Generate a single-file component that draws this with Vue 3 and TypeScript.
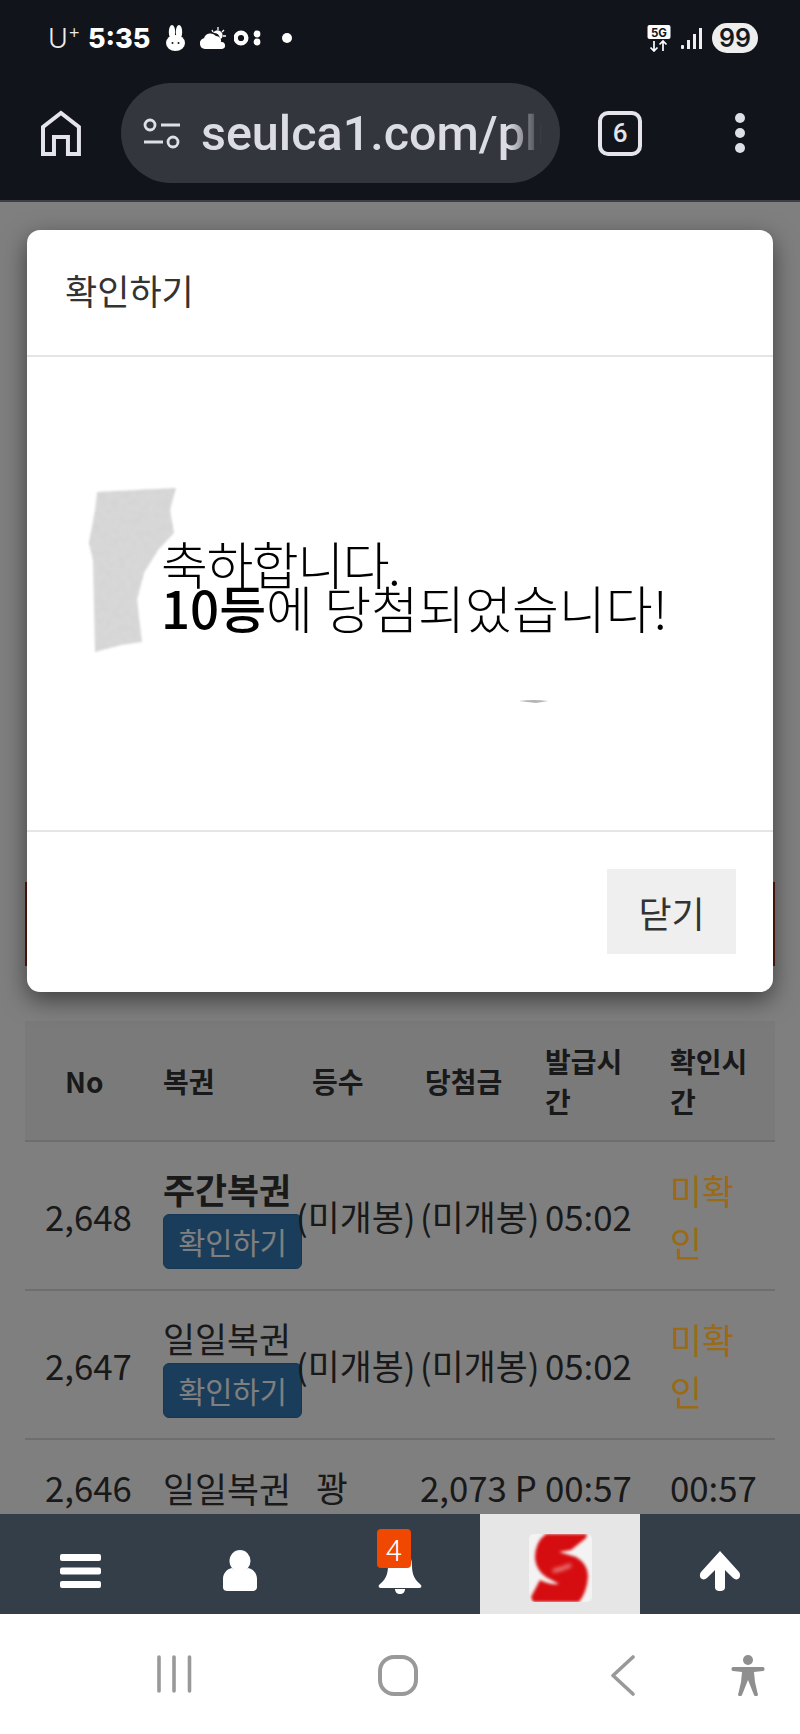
<template>
  <div class="phone">
    <header class="chrome">
      <div class="status">
        <div class="status-left">
          <span class="carrier">U<sup>+</sup></span>
          <span class="clock">5:35</span>
          <svg class="ic-rabbit" width="19" height="26" viewBox="0 0 19 26" fill="#fff">
            <ellipse cx="6" cy="7" rx="3.200" ry="7" />
            <ellipse cx="13" cy="7" rx="3.200" ry="7" />
            <ellipse cx="9.500" cy="18" rx="9.500" ry="8" />
            <circle cx="6.500" cy="18" r="1" fill="#12141b" />
            <circle cx="12.500" cy="18" r="1" fill="#12141b" />
          </svg>
          <svg class="ic-cloud" width="26" height="22" viewBox="0 0 26 22" fill="#fff">
            <path d="M5 22a5.500 5.500 0 0 1-1-10.800A7 7 0 0 1 16 9a5 5 0 0 1 5 6 3.500 3.500 0 0 1 1 7z" />
            <path d="M13 6a5 5 0 0 1 9 5l-2 1a6 6 0 0 0-7-6z" />
            <path d="M18 0v3M24 3l-2 2M12 3l1 2M26 9h-3" stroke="#fff" stroke-width="1.300" />
          </svg>
          <svg class="ic-ring" width="27" height="16" viewBox="0 0 27 16">
            <circle cx="7" cy="8" r="5.300" fill="none" stroke="#fff" stroke-width="4.400" />
            <circle cx="23" cy="4" r="3.400" fill="#fff" />
            <circle cx="23" cy="12" r="3.400" fill="#fff" />
          </svg>
          <span class="status-dot" />
        </div>
        <div class="status-right">
          <svg width="24" height="27" viewBox="0 0 24 27">
            <rect x="0.500" width="23" height="14" rx="2" fill="#fff" />
            <text x="12" y="11.500" text-anchor="middle" class="net-text">5G</text>
            <path d="M7 16v10M3.500 22.500 7 26l3.500-3.500M16 26V16M12.500 19.500 16 16l3.500 3.500" fill="none" stroke="#fff" stroke-width="1.700" />
          </svg>
          <svg width="21" height="21" viewBox="0 0 21 21" fill="#eee">
            <rect x="0" y="17" width="3" height="4" rx="1" />
            <rect x="6" y="12" width="3" height="9" />
            <rect x="12" y="6" width="3" height="15" />
            <rect x="18" y="0" width="3" height="21" />
          </svg>
          <span class="battery">99</span>
        </div>
      </div>
      <div class="toolbar">
        <svg class="ic-home" width="42" height="46" viewBox="0 0 42 46" fill="none" stroke="#e4e4ea" stroke-width="4">
          <path d="M3 44V17L21 3l18 14v27H28V27H14v17z" />
        </svg>
        <div class="url-pill">
          <svg width="38" height="31" viewBox="0 0 38 31" fill="none" stroke="#dfdfe6" stroke-width="2.800">
            <circle cx="7" cy="7" r="5" />
            <path d="M18 7h19M1 24h19" />
            <circle cx="30" cy="24" r="5" />
          </svg>
          <span class="url-text">seulca1.com/plus</span>
        </div>
        <div class="tabs">6</div>
        <svg class="ic-more" width="12" height="42" viewBox="0 0 12 42" fill="#dedee6">
          <circle cx="6" cy="6" r="5" />
          <circle cx="6" cy="21" r="5" />
          <circle cx="6" cy="36" r="5" />
        </svg>
      </div>
    </header>

    <main class="page">
      <div class="banner" />
      <div class="table">
        <div class="thead">
          <div class="th th-no">No</div>
          <div class="th">복권</div>
          <div class="th th-rank">등수</div>
          <div class="th th-prize">당첨금</div>
          <div class="th th-wrap">발급시간</div>
          <div class="th th-wrap">확인시간</div>
        </div>
        <div v-for="row in rows" :key="row.no" class="tr" :class="{ 'tr-short': !row.open }">
          <div class="td td-no">{{ row.no }}</div>
          <div class="td td-name">
            <div :class="{ strong: row.strong }">{{ row.name }}</div>
            <button v-if="row.open" class="open-btn" type="button">확인하기</button>
          </div>
          <div class="td" :class="{ 'td-rank': row.rank === '꽝' }">{{ row.rank }}</div>
          <div class="td">{{ row.prize }}</div>
          <div class="td">{{ row.issued }}</div>
          <div class="td td-check" :class="{ unchecked: row.checked === '미확인' }">{{ row.checked }}</div>
        </div>
      </div>

      <div class="backdrop" />

      <section class="modal">
        <div class="modal-head">확인하기</div>
        <div class="modal-body">
          <svg class="scratch" width="746" height="474" viewBox="27 357 746 474">
            <defs>
              <filter id="grain" x="-5%" y="-5%" width="110%" height="110%">
                <feTurbulence type="fractalNoise" baseFrequency="0.16" numOctaves="3" seed="4" result="noise" />
                <feColorMatrix in="noise" type="matrix" values="0 0 0 0 0.66  0 0 0 0 0.66  0 0 0 0 0.66  3.5 0 0 0 -1.5" result="spots" />
                <feComposite in="spots" in2="SourceGraphic" operator="in" result="clipped" />
                <feMerge result="merged">
                  <feMergeNode in="SourceGraphic" />
                  <feMergeNode in="clipped" />
                </feMerge>
                <feGaussianBlur in="merged" stdDeviation="0.800" />
              </filter>
            </defs>
            <path
              class="patch"
              filter="url(#grain)"
              d="M97 492 176 488 170 510 174 533 158 550 144 573 137 600 142 642 121 645 95 652 93 560 89 543 95 510z"
            />
            <path d="M519 701q14-2 29 0l-12 2z" fill="#b5b5b5" />
          </svg>
          <p class="prize-text"><span class="prize-first">축하합니다.</span><br><b>10등</b>에 당첨되었습니다!</p>
        </div>
        <div class="modal-foot">
          <button class="close-btn" type="button">닫기</button>
        </div>
      </section>
    </main>

    <nav class="bottom-nav">
      <div class="nav-item">
        <svg width="41" height="34" viewBox="0 0 41 34" fill="#fff">
          <rect width="41" height="7" rx="2" />
          <rect y="13.500" width="41" height="7" rx="2" />
          <rect y="27" width="41" height="7" rx="2" />
        </svg>
      </div>
      <div class="nav-item">
        <svg width="34" height="41" viewBox="0 0 34 41" fill="#fff">
          <ellipse cx="17" cy="11" rx="10.500" ry="11" />
          <path d="M9 18c3 4 13 4 16 0 5 1 9 5 9 11v8c0 3-2 4-5 4H5c-3 0-5-1-5-4v-8c0-6 4-10 9-11z" />
        </svg>
      </div>
      <div class="nav-item nav-bell">
        <svg width="44" height="46" viewBox="0 0 44 46" fill="#fff">
          <path d="M22 0c2 0 3 1 3 3 7 2 9 8 9 15 0 9 3 14 9 19 1 2 0 3-2 3H3c-2 0-3-1-2-3 6-5 9-10 9-19 0-7 2-13 9-15 0-2 1-3 3-3z" />
          <path d="M17 41h10c0 3-2 5-5 5s-5-2-5-5z" />
        </svg>
        <span class="badge">4</span>
      </div>
      <div class="nav-item nav-logo">
        <svg class="logo" width="63" height="68" viewBox="0 0 63 68">
          <path
            class="logo-s"
            d="M17 0H58L57 4 42 16 30 18 47 23Q59 30 59 42 58 58 50 68H4L2 63 11 46Q20 51 30 50L17 43Q7 36 6 24 6 8 17 0Z"
          />
          <path class="logo-glint" d="M24 37Q34 35 42 31" />
        </svg>
      </div>
      <div class="nav-item">
        <svg width="42" height="40" viewBox="0 0 42 40" fill="#fff">
          <path d="M21 0 40 21c2 3 1 6-1 7s-4 0-6-2l-7-7v17c0 3-2 4-5 4s-5-1-5-4V19l-7 7c-2 2-4 3-6 2s-3-4-1-7z" />
        </svg>
      </div>
    </nav>

    <footer class="system-nav">
      <svg class="sys-recent" width="37" height="38" viewBox="0 0 37 38" stroke="#999" stroke-width="3.600" stroke-linecap="round">
        <path d="M3 2v34M18 2v34M33.500 2v34" />
      </svg>
      <svg class="sys-home" width="40" height="41" viewBox="0 0 40 41" fill="none" stroke="#999" stroke-width="4">
        <rect x="2" y="2" width="36" height="37" rx="14" />
      </svg>
      <svg class="sys-back" width="26" height="41" viewBox="0 0 26 41" fill="none" stroke="#999" stroke-width="3.600" stroke-linecap="round" stroke-linejoin="round">
        <path d="M23 2 3 20.500 23 39" />
      </svg>
      <svg class="sys-access" width="34" height="41" viewBox="0 0 34 41" fill="#8f8f8f">
        <circle cx="17" cy="5" r="5" />
        <path d="M2 12h30c2 0 2 4 0 4l-9 1 1 10 3 13c0 1-3 2-4 0l-6-15-6 15c-1 2-4 1-4 0l3-13 1-10-9-1c-2 0-2-4 0-4z" />
      </svg>
    </footer>
  </div>
</template>

<script setup lang="ts">
interface LottoRow {
  no: string;
  name: string;
  strong?: boolean;
  open?: boolean;
  rank: string;
  prize: string;
  issued: string;
  checked: string;
}

const rows: LottoRow[] = [
  { no: '2,648', name: '주간복권', strong: true, open: true, rank: '(미개봉)', prize: '(미개봉)', issued: '05:02', checked: '미확인' },
  { no: '2,647', name: '일일복권', open: true, rank: '(미개봉)', prize: '(미개봉)', issued: '05:02', checked: '미확인' },
  { no: '2,646', name: '일일복권', rank: '꽝', prize: '2,073 P', issued: '00:57', checked: '00:57' },
];
</script>

<style>
html,
body {
  margin: 0;
  background: #fff;
}
</style>

<style scoped>
.phone {
  display: flex;
  flex-direction: column;
  width: 800px;
  height: 1734px;
  overflow: hidden;
  font-family: "Noto Sans CJK KR", "Noto Sans", sans-serif;
  color: #333;
}

.chrome {
  flex: none;
  height: 202px;
  background: #12141b;
  border-bottom: 2px solid #3c3f47;
  box-sizing: border-box;
}

.status {
  display: flex;
  justify-content: space-between;
  align-items: center;
  height: 76px;
  padding: 0 42px 0 48px;
}

.status-left,
.status-right {
  display: flex;
  align-items: center;
}

.carrier {
  width: 40px;
  font-family: "Inter", sans-serif;
  font-size: 27px;
  font-weight: 300;
  color: #eee;
}

.carrier sup {
  font-size: 19px;
  line-height: 0;
}

.clock {
  width: 78px;
  font-family: "Inter", sans-serif;
  font-size: 27px;
  font-weight: 800;
  color: #fff;
}

.ic-cloud {
  margin-left: 15px;
}

.ic-ring {
  margin-left: 8px;
}

.status-dot {
  width: 10px;
  height: 10px;
  margin-left: 21px;
  border-radius: 50%;
  background: #fff;
}

.status-right {
  gap: 10px;
}

.net-text {
  font-family: "Inter", sans-serif;
  font-size: 11.500px;
  font-weight: 700;
  fill: #12141b;
}

.battery {
  width: 46px;
  height: 30px;
  border-radius: 15px;
  background: #eee;
  color: #17181d;
  font-family: "Inter", sans-serif;
  font-size: 25px;
  font-weight: 600;
  line-height: 30px;
  text-align: center;
}

.toolbar {
  display: flex;
  align-items: center;
  height: 124px;
  margin-top: -5px;
  padding: 0 54px 0 40px;
}

.url-pill {
  display: flex;
  align-items: center;
  gap: 20px;
  width: 440px;
  height: 100px;
  margin-left: 39px;
  padding: 0 18px 0 22px;
  border-radius: 50px;
  background: #34363d;
  box-sizing: border-box;
  overflow: hidden;
}

.url-pill svg {
  flex: none;
}

.url-text {
  flex: 1;
  overflow: hidden;
  font-family: "Roboto", sans-serif;
  font-size: 48.500px;
  font-weight: 500;
  white-space: nowrap;
  color: #dcdce4;
  -webkit-mask-image: linear-gradient(90deg, #000 90%, transparent);
  mask-image: linear-gradient(90deg, #000 90%, transparent);
}

.tabs {
  width: 44px;
  height: 45px;
  margin-left: 38px;
  border: 4px solid #e4e4ea;
  border-radius: 10px;
  box-sizing: border-box;
  font-family: "Roboto", sans-serif;
  font-size: 26px;
  font-weight: 500;
  line-height: 37px;
  text-align: center;
  color: #e4e4ea;
}

.ic-more {
  margin-left: 92px;
}

.page {
  position: relative;
  flex: 1;
  min-height: 0;
  overflow: hidden;
  background: #fff;
  padding: 680px 25px 0;
}

.banner {
  height: 84px;
  margin-bottom: 55px;
  background: #b5301c;
}

.table {
  width: 750px;
}

.thead,
.tr {
  display: grid;
  grid-template-columns: 138px 133px 124px 125px 125px 105px;
  align-items: center;
}

.thead {
  height: 121px;
  background: #f5f5f5;
  border-bottom: 2px solid #ddd;
  box-sizing: border-box;
}

.th {
  font-size: 28px;
  font-weight: 700;
  line-height: 40px;
}

.th-no {
  padding-left: 40px;
}

.th-rank {
  padding-left: 16px;
}

.th-prize {
  padding-left: 5px;
}

.th-wrap {
  width: 80px;
  word-break: break-all;
}

.tr {
  height: 149px;
  border-bottom: 2px solid #ddd;
  box-sizing: border-box;
  font-size: 34.800px;
}

.tr-short {
  height: 96px;
}

.td {
  white-space: nowrap;
  line-height: 50px;
}

.td-no {
  padding-left: 20px;
}

.td-name {
  padding-top: 2px;
  line-height: 49px;
}

.td-rank {
  padding-left: 20px;
}

.td-check {
  white-space: normal;
  line-height: 52px;
}

.unchecked {
  position: relative;
  z-index: 1;
  width: 70px;
  color: #9a6a16;
  word-break: break-all;
}

.strong {
  font-weight: 700;
}

.open-btn {
  display: block;
  width: 139px;
  height: 55px;
  padding: 0;
  border: 1px solid #2e6da4;
  border-radius: 6px;
  background: #337ab7;
  color: #fff;
  font-family: inherit;
  font-size: 29.500px;
  line-height: 50px;
}

.tr:first-of-type .open-btn {
  background: #286090;
}

.backdrop {
  position: absolute;
  inset: 0;
  background: rgba(0, 0, 0, 0.5);
}

.modal {
  position: absolute;
  top: 28px;
  left: 27px;
  display: flex;
  flex-direction: column;
  width: 746px;
  height: 762px;
  border-radius: 13px;
  background: #fff;
  box-shadow: 0 8px 24px rgba(0, 0, 0, 0.5);
}

.modal-head {
  flex: none;
  height: 127px;
  padding-left: 38px;
  border-bottom: 2px solid #e5e5e5;
  box-sizing: border-box;
  font-size: 35px;
  line-height: 120px;
  color: #333;
}

.modal-body {
  position: relative;
  flex: 1;
  min-height: 0;
}

.scratch {
  position: absolute;
  top: 0;
  left: 0;
}

.patch {
  fill: #d8d8d8;
}

.prize-text {
  position: relative;
  margin: 0;
  padding: 184px 0 0 134px;
  font-size: 51px;
  font-weight: 300;
  line-height: 44px;
  white-space: nowrap;
  color: #000;
}

.prize-text b {
  font-weight: 500;
}

.prize-first {
  letter-spacing: -1.500px;
}

.modal-foot {
  flex: none;
  display: flex;
  justify-content: flex-end;
  height: 162px;
  padding: 37px 37px 0 0;
  border-top: 2px solid #e5e5e5;
  box-sizing: border-box;
}

.close-btn {
  width: 129px;
  height: 85px;
  padding: 0;
  border: 0;
  background: #efefef;
  color: #333;
  font-family: inherit;
  font-size: 36px;
}

.bottom-nav {
  flex: none;
  display: grid;
  grid-template-columns: repeat(5, 160px);
  height: 100px;
  background: #333e49;
}

.nav-item {
  position: relative;
  display: flex;
  align-items: center;
  justify-content: center;
  padding-top: 13px;
  box-sizing: border-box;
}

.nav-logo {
  padding-top: 8px;
  background: #e6e6e6;
}

.logo {
  border-radius: 5px;
  background: #f3f3f3;
}

.logo-s {
  fill: #d60d10;
  filter: blur(1.500px);
}

.logo-glint {
  fill: none;
  stroke: #f2a5a5;
  stroke-width: 3;
  filter: blur(2px);
}

.badge {
  position: absolute;
  top: 15px;
  left: 57px;
  width: 34px;
  height: 39px;
  border-radius: 4px;
  background: #f04800;
  color: #fff;
  font-size: 30px;
  font-weight: 300;
  line-height: 39px;
  text-align: center;
}

.system-nav {
  flex: none;
  position: relative;
  height: 120px;
  background: #fff;
}

.system-nav svg {
  position: absolute;
  top: 41px;
}

.sys-recent {
  left: 156px;
}

.sys-home {
  left: 378px;
}

.sys-back {
  left: 610px;
}

.sys-access {
  left: 731px;
}
</style>
